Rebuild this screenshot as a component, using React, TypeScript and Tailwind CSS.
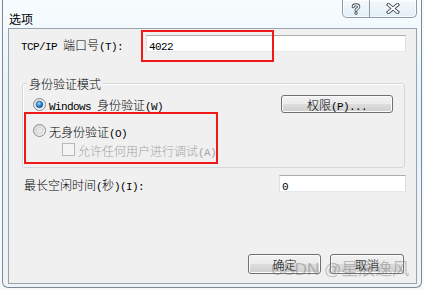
import React from "react";

const isCJK = (c: string) => /[\u2e80-\u9fff\u3000-\u303f\uff00-\uffef]/.test(c);

function MT({ s }: { s: string }) {
  const runs: { cjk: boolean; t: string }[] = [];
  for (const ch of s) {
    const c = isCJK(ch);
    const last = runs[runs.length - 1];
    if (last && last.cjk === c) last.t += ch;
    else runs.push({ cjk: c, t: ch });
  }
  return (
    <span className="whitespace-pre">
      {runs.map((r, i) =>
        r.cjk ? (
          <span key={i} className="font-['Noto_Sans_CJK_SC',sans-serif] font-light text-[12px] leading-[14px]">
            {r.t}
          </span>
        ) : (
          <span key={i} className="font-['Liberation_Mono',monospace] text-[11px] leading-[14px] tracking-[-0.6px]">
            {r.t}
          </span>
        )
      )}
    </span>
  );
}

function RadioOn() {
  return (
    <svg width="13" height="13" viewBox="0 0 13 13" className="shrink-0">
      <defs>
        <linearGradient id="ro" x1="0" y1="0" x2="1" y2="1">
          <stop offset="0" stopColor="#d8d8d8" />
          <stop offset="1" stopColor="#fbfbfb" />
        </linearGradient>
        <radialGradient id="rd" cx="0.4" cy="0.35" r="0.7">
          <stop offset="0" stopColor="#a9e0ff" />
          <stop offset="0.5" stopColor="#2a8fdd" />
          <stop offset="1" stopColor="#0b4a9e" />
        </radialGradient>
      </defs>
      <circle cx="6.5" cy="6.5" r="6" fill="url(#ro)" stroke="#8a8a8a" strokeWidth="1" />
      <circle cx="6.5" cy="6.5" r="3.3" fill="url(#rd)" stroke="#1e4f86" strokeWidth="0.6" />
    </svg>
  );
}

function RadioOff() {
  return (
    <svg width="13" height="13" viewBox="0 0 13 13" className="shrink-0">
      <defs>
        <linearGradient id="rf" x1="0" y1="0" x2="1" y2="1">
          <stop offset="0" stopColor="#d6d6d6" />
          <stop offset="1" stopColor="#fafafa" />
        </linearGradient>
      </defs>
      <circle cx="6.5" cy="6.5" r="6" fill="url(#rf)" stroke="#8a8a8a" strokeWidth="1" />
      <circle cx="6.5" cy="6.5" r="3.5" fill="#e6e6e6" stroke="#c8c8c8" strokeWidth="0.6" />
    </svg>
  );
}

function WinBtn({ children, w }: { children: React.ReactNode; w: string }) {
  return (
    <div
      className={`${w} h-full flex items-center justify-center rounded-[3px] border border-[#707070] bg-[linear-gradient(#f2f2f2_0%,#ebebeb_50%,#dddddd_50%,#cfcfcf_100%)] shadow-[inset_0_0_0_1px_#fbfbfb] text-black`}
    >
      {children}
    </div>
  );
}

function TextBox({ w, value }: { w: string; value: string }) {
  return (
    <div
      className={`${w} h-[17px] shrink-0 bg-white border border-t-[#abadb3] border-l-[#dbdfe6] border-r-[#dbdfe6] border-b-[#e3e9ef] flex items-center pl-[2px] text-black`}
    >
      <MT s={value} />
    </div>
  );
}

export default function App() {
  return (
    <div className="relative w-[424px] h-[290px] overflow-hidden bg-[#f7fafc] text-black">
      <div className="relative ml-[2px] w-[420px] h-[288px] border-x border-b border-[#7d8896] rounded-b-[6px] bg-[linear-gradient(180deg,#f8fcfe_0%,#e6f4fb_30%,#e9f3f9_60%,#eef3f7_100%)]">
        {/* title bar */}
        <div className="h-[28px] pl-[6px] pt-[6px]">
          <span className="font-['Noto_Sans_CJK_SC',sans-serif] text-[12px] leading-[14px] text-black">选项</span>
        </div>
        {/* caption buttons */}
        <div className="absolute top-0 right-[4px] w-[75px] h-[18px] flex rounded-b-[5px] border border-t-0 border-[#8d9aaa] bg-[linear-gradient(180deg,#f4f9fc,#e2eef6)] shadow-[inset_0_0_0_1px_rgba(255,255,255,0.7)]">
          <div className="w-[27px] h-full flex items-center justify-center border-r border-[#8d9aaa]">
            <svg width="10" height="12" viewBox="0 0 10 12">
              <path d="M2.2 3.8 C2.2 1.2 7.8 1.2 7.8 3.8 C7.8 5.6 5 5.6 5 7.6" fill="none" stroke="#3b4756" strokeWidth="3" strokeLinecap="round" />
              <path d="M5 10 L5 10.3" fill="none" stroke="#3b4756" strokeWidth="3" strokeLinecap="round" />
              <path d="M2.2 3.8 C2.2 1.2 7.8 1.2 7.8 3.8 C7.8 5.6 5 5.6 5 7.6" fill="none" stroke="#ffffff" strokeWidth="1.3" strokeLinecap="round" />
              <path d="M5 10 L5 10.3" fill="none" stroke="#ffffff" strokeWidth="1.3" strokeLinecap="round" />
            </svg>
          </div>
          <div className="flex-1 h-full flex items-center justify-center">
            <svg width="14" height="11" viewBox="0 0 14 11">
              <path d="M2.5 1.8 L11.5 9.2 M11.5 1.8 L2.5 9.2" fill="none" stroke="#3b4756" strokeWidth="3.6" strokeLinecap="square" />
              <path d="M2.5 1.8 L11.5 9.2 M11.5 1.8 L2.5 9.2" fill="none" stroke="#ffffff" strokeWidth="1.8" strokeLinecap="square" />
            </svg>
          </div>
        </div>

        {/* client area */}
        <div className="ml-[5px] w-[409px] h-[256px] border border-[#99a2ad] bg-[#f0f0f0] flex flex-col">
          {/* row 1 */}
          <div className="mt-[6px] h-[17px] flex items-center">
            <div className="w-[137px] shrink-0 pl-[12px]">
              <MT s="TCP/IP 端口号(T):" />
            </div>
            <TextBox w="w-[260px]" value="4022" />
          </div>

          {/* group box */}
          <div className="relative mt-[31px] ml-[13px] w-[383px] h-[85px] shrink-0 rounded-[3px] border border-[#d1d9df] shadow-[inset_1px_1px_0_#ffffff] flex flex-col">
            <span className="absolute left-[4px] top-[-8px] px-[2px] bg-[#f0f0f0] leading-[14px]">
              <MT s="身份验证模式" />
            </span>
            <div className="mt-[11px] h-[18px] flex items-center pl-[10px]">
              <RadioOn />
              <span className="ml-[3px]">
                <MT s="Windows 身份验证(W)" />
              </span>
              <div className="ml-auto mr-[11px] h-[18px]">
                <WinBtn w="w-[112px]">
                  <MT s="权限(P)..." />
                </WinBtn>
              </div>
            </div>
            <div className="mt-[11px] h-[13px] flex items-center pl-[10px]">
              <RadioOff />
              <span className="ml-[3px]">
                <MT s="无身份验证(O)" />
              </span>
            </div>
            <div className="mt-[6px] h-[13px] flex items-center pl-[39px] text-[#a3a3a3]">
              <div className="w-[13px] h-[13px] shrink-0 border border-[#b8b8b8] bg-[#f4f4f4]" />
              <span className="ml-[3px]">
                <MT s="允许任何用户进行调试(A)" />
              </span>
            </div>
          </div>

          {/* idle row */}
          <div className="mt-[7px] h-[17px] flex items-center">
            <div className="w-[270px] shrink-0 pl-[15px]">
              <MT s="最长空闲时间(秒)(I):" />
            </div>
            <TextBox w="w-[127px]" value="0" />
          </div>

          {/* buttons */}
          <div className="mt-[62px] h-[20px] flex justify-end gap-[9px] mr-[12px]">
            <WinBtn w="w-[73px]">
              <MT s="确定" />
            </WinBtn>
            <WinBtn w="w-[74px]">
              <MT s="取消" />
            </WinBtn>
          </div>
        </div>
      </div>

      {/* annotations */}
      <div className="absolute left-[141px] top-[30px] w-[133px] h-[32px] border-2 border-[#f01818]" />
      <div className="absolute left-[24px] top-[112px] w-[194px] h-[52px] border-2 border-[#f01818]" />
      <div className="absolute left-[271px] top-[259px] font-['Liberation_Sans','Noto_Sans_CJK_SC',sans-serif] text-[17px] leading-[22px] text-[rgba(120,120,120,0.45)] whitespace-nowrap">
        CSDN @星辰逸风
      </div>
    </div>
  );
}
